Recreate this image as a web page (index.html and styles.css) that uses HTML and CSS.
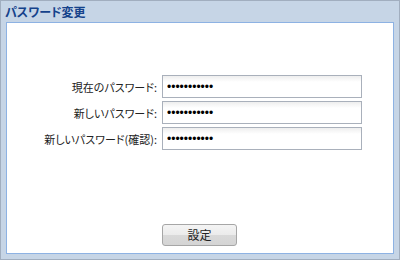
FILE: index.html
```html
<!DOCTYPE html>
<html lang="ja">
<head>
<meta charset="utf-8">
<link rel="stylesheet" href="styles.css">
</head>
<body>
<div class="window">
  <div class="header">パスワード変更</div>
  <div class="body">
    <form class="form">
      <label class="label" for="cur">現在のパスワード:</label>
      <input class="field" id="cur" type="password" value="12345678901">
      <label class="label" for="new1">新しいパスワード:</label>
      <input class="field" id="new1" type="password" value="12345678901">
      <label class="label" for="new2">新しいパスワード(確認):</label>
      <input class="field" id="new2" type="password" value="12345678901">
    </form>
    <div class="actions">
      <button class="btn" type="button">設定</button>
    </div>
  </div>
</div>
</body>
</html>
```
FILE: styles.css
```css
html, body {
  margin: 0;
  padding: 0;
  background: #ffffff;
}
.window {
  width: 400px;
  height: 260px;
  box-sizing: border-box;
  border: 1px solid #a1aebf;
  background: #c6d5e6;
  display: flex;
  flex-direction: column;
  padding: 0 5px 5px 4px;
  font-family: "Noto Sans CJK JP", sans-serif;
}
.header {
  height: 22px;
  line-height: 23px;
  font-size: 12px;
  font-weight: bold;
  color: #15428b;
  font-feature-settings: "palt";
  margin-top: -1px;
}
.body {
  flex: 1;
  margin-left: 1px;
  background: #ffffff;
  border: 1px solid #8db2e3;
  display: flex;
  flex-direction: column;
}
.form {
  margin: 52px 0 0 0;
  display: grid;
  grid-template-columns: 150px 200px;
  column-gap: 5px;
  row-gap: 3px;
  align-items: center;
}
.label {
  text-align: right;
  font-size: 11px;
  font-feature-settings: "palt";
  color: #222222;
  white-space: nowrap;
}
.field {
  box-sizing: border-box;
  width: 200px;
  height: 23px;
  margin: 0;
  border: 1px solid #a9b0bb;
  border-radius: 0;
  background: linear-gradient(#eeeeee, #ffffff 6px, #ffffff);
  padding: 0 4px;
  font-family: "Liberation Sans", sans-serif;
  font-size: 12px;
  color: #000000;
}
.actions {
  margin-top: auto;
  padding-bottom: 7px;
  padding-left: 155px;
}
.btn {
  width: 75px;
  height: 22px;
  box-sizing: border-box;
  border: 1px solid #a6a6a6;
  border-radius: 3px;
  background: linear-gradient(#f4f4f4, #ebebeb 50%, #d9d9d9 50%, #d4d4d4);
  font-family: "Noto Sans CJK JP", sans-serif;
  font-size: 12px;
  color: #222222;
  padding: 0;
  line-height: 20px;
}
```
